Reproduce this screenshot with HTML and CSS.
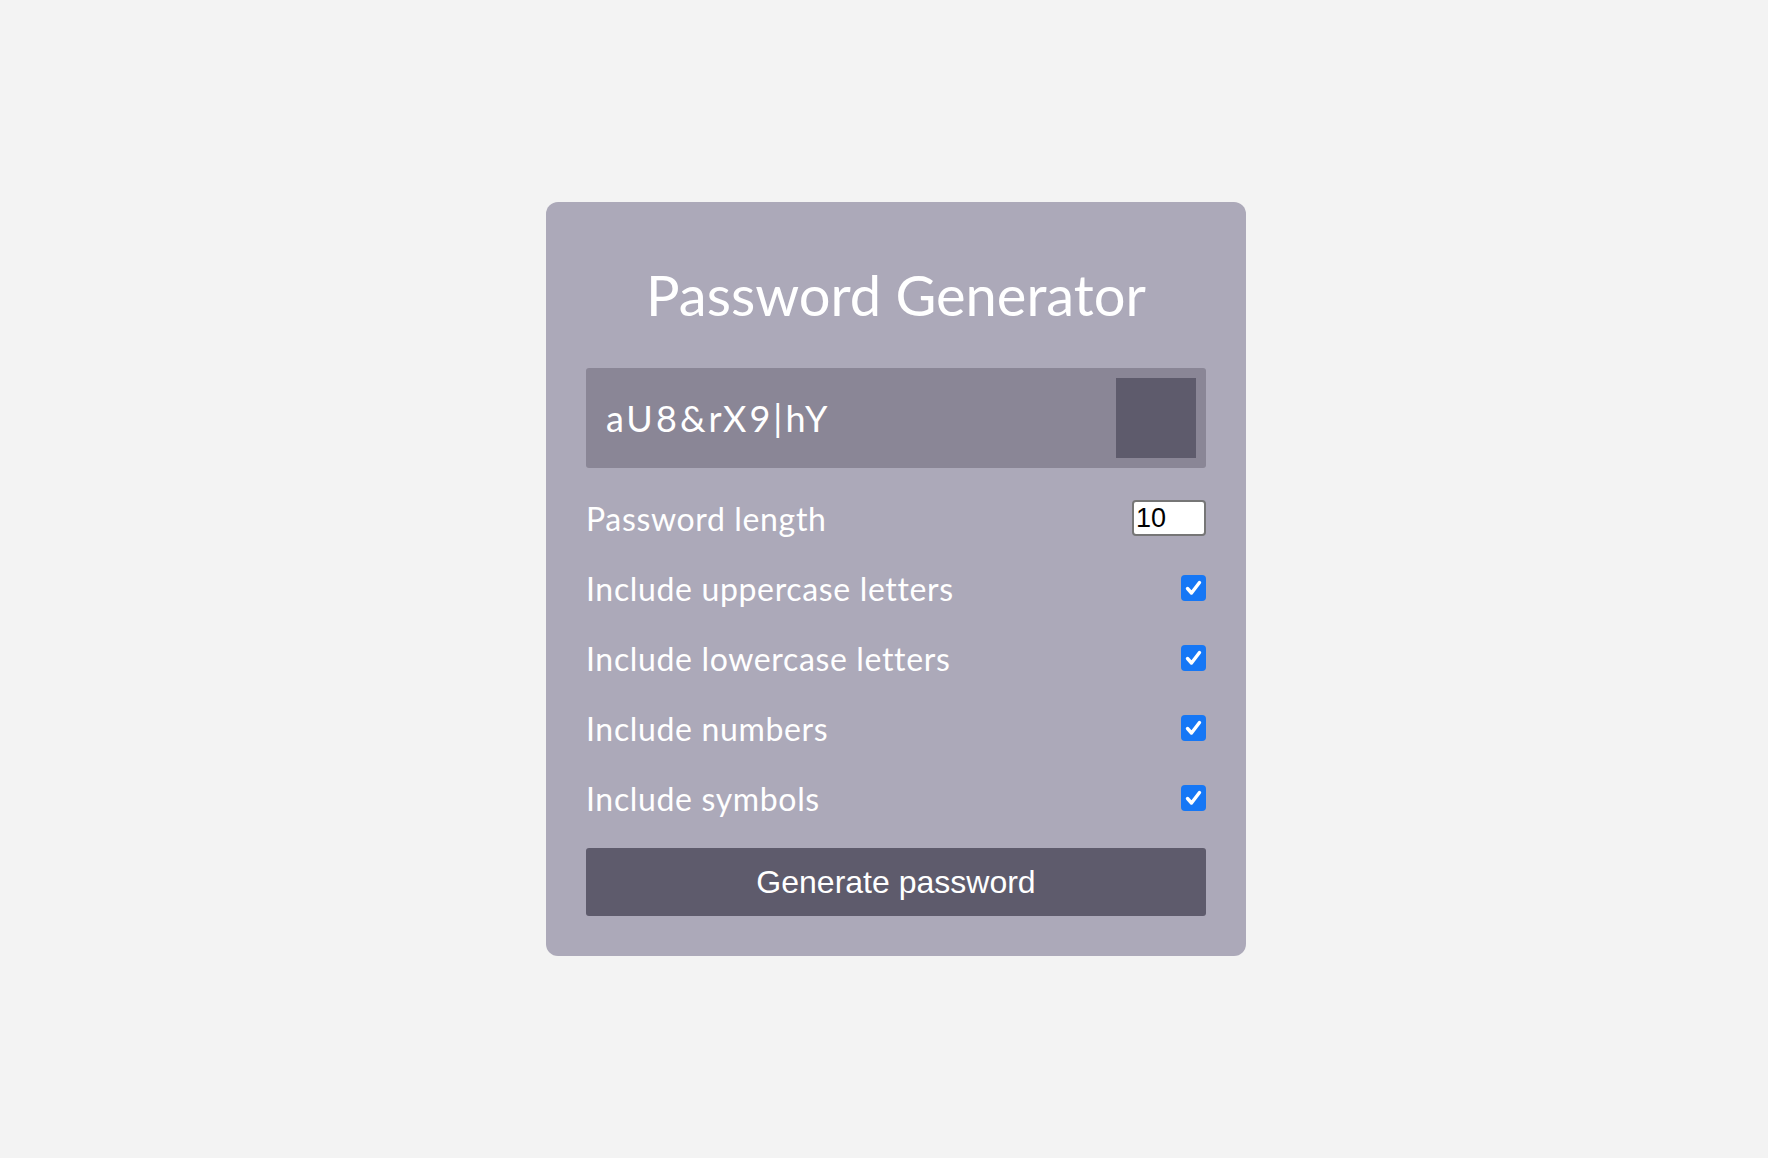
FILE: index.html
```html
<!DOCTYPE html>
<html lang="en">
<head>
<meta charset="utf-8">
<title>Password Generator</title>
<link rel="stylesheet" href="styles.css">
</head>
<body>
  <div class="container">
    <h2 class="title">Password Generator</h2>
    <div class="result-container">
      <span class="result">aU8&amp;rX9|hY</span>
      <button class="btn btn-copy" aria-label="Copy"></button>
    </div>
    <div class="settings">
      <div class="setting">
        <label>Password length</label>
        <input type="number" class="length" value="10">
      </div>
      <div class="setting">
        <label>Include uppercase letters</label>
        <input type="checkbox" class="check" checked>
      </div>
      <div class="setting">
        <label>Include lowercase letters</label>
        <input type="checkbox" class="check" checked>
      </div>
      <div class="setting">
        <label>Include numbers</label>
        <input type="checkbox" class="check" checked>
      </div>
      <div class="setting">
        <label>Include symbols</label>
        <input type="checkbox" class="check" checked>
      </div>
    </div>
    <button class="btn btn-large">Generate password</button>
  </div>
</body>
</html>
```
FILE: styles.css
```css
* { box-sizing: border-box; }

html, body { height: 100%; }

body {
  margin: 0;
  padding-left: 24px;
  background: #f3f3f3;
  font-family: "Lato", "Open Sans", sans-serif;
  color: #fff;
  display: flex;
  align-items: center;
  justify-content: center;
}

.container {
  width: 700px;
  padding: 40px;
  background: #aca9b9;
  border-radius: 12px;
}

.title {
  margin: 20px 0 40px;
  font-size: 56px;
  line-height: 66px;
  font-weight: 400;
  text-align: center;
}

.result-container {
  position: relative;
  display: flex;
  align-items: center;
  height: 100px;
  padding: 24px 20px;
  background: #8a8696;
  border-radius: 3px;
  font-size: 36px;
  letter-spacing: 3.1px;
}

.btn {
  border: none;
  background: #5e5b6c;
  color: #fff;
  font-family: "Liberation Sans", Arial, sans-serif;
  font-size: 32px;
  padding: 16px 24px;
  border-radius: 3px;
  cursor: pointer;
}

.btn-copy {
  position: absolute;
  top: 10px;
  right: 10px;
  width: 80px;
  height: 80px;
  padding: 0;
  border-radius: 0;
}

.btn-large {
  display: block;
  width: 100%;
  line-height: 36px;
}

.setting {
  display: flex;
  justify-content: space-between;
  align-items: center;
  margin: 30px 0;
  height: 40px;
  font-size: 32px;
}

.setting label {
  letter-spacing: 0.65px;
}

.length {
  width: 74px;
  height: 36px;
  border: 2px solid #767676;
  border-radius: 4px;
  background: #fff;
  color: #000;
  font-family: "Liberation Sans", Arial, sans-serif;
  font-size: 27px;
  padding: 0 2px;
  margin: 0;
  -moz-appearance: textfield;
}

.length::-webkit-inner-spin-button,
.length::-webkit-outer-spin-button {
  -webkit-appearance: none;
  margin: 0;
}

.check {
  -webkit-appearance: none;
  appearance: none;
  width: 25px;
  height: 26px;
  margin: 0;
  border-radius: 4px;
  background-color: #1677f5;
  background-image: url("data:image/svg+xml,%3Csvg xmlns='http://www.w3.org/2000/svg' viewBox='0 0 25 26'%3E%3Cpath d='M6.5 13.5 L10.5 18 L18.5 7.5' fill='none' stroke='white' stroke-width='3.4' stroke-linecap='round' stroke-linejoin='round'/%3E%3C/svg%3E");
  background-size: 100% 100%;
}
```
